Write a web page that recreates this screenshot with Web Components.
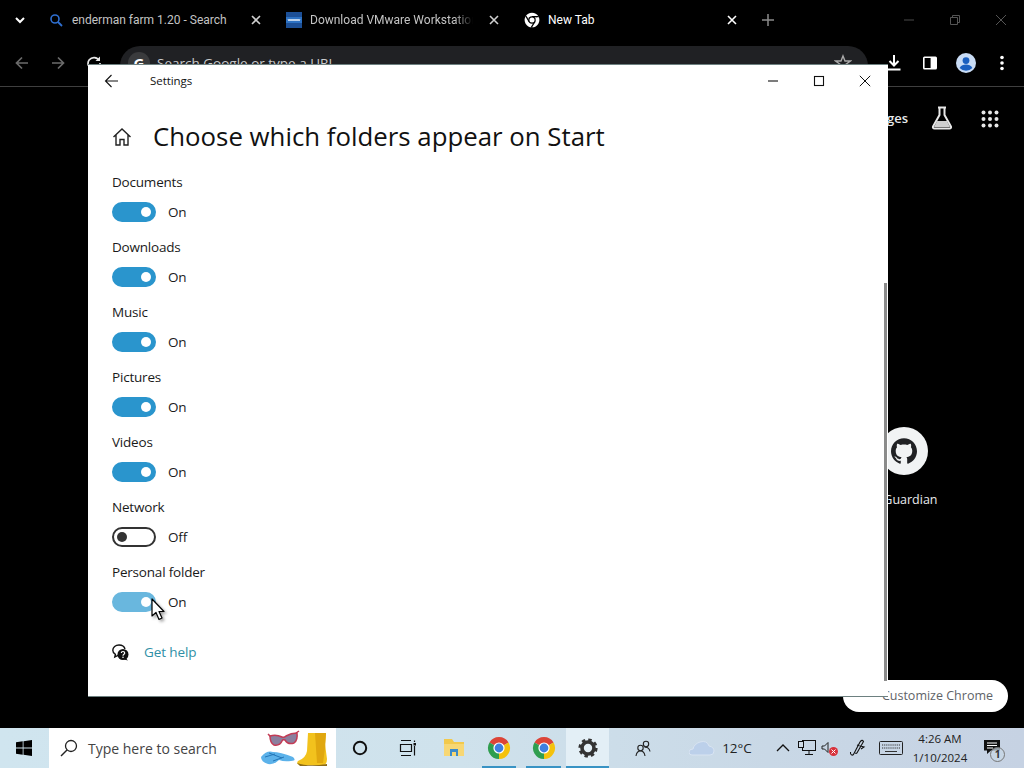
<!DOCTYPE html>
<html lang="en"><head><meta charset="utf-8"><title>Settings</title>
<style>
html,body{margin:0;padding:0;width:1024px;height:768px;overflow:hidden;background:#000;font-family:"Open Sans","Noto Sans",sans-serif}
</style></head>
<body>
<x-desktop>
  <x-browser></x-browser>
  <x-taskbar></x-taskbar>
  <x-settings-window slot="window">
    <x-folder-row label="Documents" state="on"></x-folder-row>
    <x-folder-row label="Downloads" state="on"></x-folder-row>
    <x-folder-row label="Music" state="on"></x-folder-row>
    <x-folder-row label="Pictures" state="on"></x-folder-row>
    <x-folder-row label="Videos" state="on"></x-folder-row>
    <x-folder-row label="Network" state="off"></x-folder-row>
    <x-folder-row label="Personal folder" state="hover"></x-folder-row>
  </x-settings-window>
</x-desktop>
<script>
const chromeLogo=(s,mono)=>`<svg width="${s}" height="${s}" viewBox="0 0 24 24">
<path d="M12 12L2.47 6.5A11 11 0 0 1 21.53 6.5Z" fill="${mono?'#fff':'#dc4437'}"/>
<path d="M12 12L21.53 6.5A11 11 0 0 1 12 23Z" fill="${mono?'#fff':'#f4c20d'}"/>
<path d="M12 12L12 23A11 11 0 0 1 2.47 6.5Z" fill="${mono?'#fff':'#2f9e4f'}"/>
${mono?'<path d="M12 7H22M7.7 14.500L2.700 6M16.300 14.500L11 23" stroke="#000" stroke-width="1.800"/>':''}
<circle cx="12" cy="12" r="5.6" fill="${mono?'#000':'#fff'}"/><circle cx="12" cy="12" r="${mono?3.8:4.4}" fill="${mono?'#fff':'#3f7fe0'}"/></svg>`;
const shadow=(el,html)=>{const r=el.attachShadow({mode:'open'});r.innerHTML=html;return r;};

customElements.define('x-desktop',class extends HTMLElement{constructor(){super();shadow(this,`<style>
:host{display:flex;flex-direction:column;width:1024px;height:768px;position:relative;overflow:hidden;background:#000}
::slotted(x-browser){flex:1 1 auto}
::slotted(x-settings-window){position:absolute;left:88px;top:64px}
</style><slot></slot><slot name="window"></slot>`);}});

customElements.define('x-tab',class extends HTMLElement{constructor(){super();
const fade=this.hasAttribute('fade');
shadow(this,`<style>
:host{display:flex;align-items:center;width:238px;height:40px;box-sizing:border-box;padding:0 14px 0 8px;gap:8px;font:12px/40px Roboto,"Open Sans",sans-serif;color:${this.hasAttribute('active')?'#fff':'#c4c4c4'}}
.t{flex:1;min-width:0;white-space:nowrap;overflow:hidden;${fade?'-webkit-mask-image:linear-gradient(90deg,#000 86%,transparent 97%);':''}}
.i{width:16px;height:16px;display:flex;flex:none}
svg.x{flex:none}
</style><span class="i"><slot name="icon"></slot></span><span class="t"><slot></slot></span>
<svg class="x" width="16" height="16" viewBox="0 0 16 16"><path d="M4 4L12 12M12 4L4 12" stroke="${this.hasAttribute('active')?'#fff':'#d0d0d0'}" stroke-width="1.6"/></svg>`);}});

customElements.define('x-browser',class extends HTMLElement{constructor(){super();shadow(this,`<style>
:host{display:flex;flex-direction:column;background:#000;min-height:0}
.tabs{height:40px;display:flex;align-items:center}
.chev{width:40px;display:flex;justify-content:center}
.plus{width:30px;margin-left:-1px;display:flex;justify-content:center}
.winc{margin-left:auto;display:flex;align-items:center}
.winc span{width:46px;display:flex;justify-content:center}
.bar{height:47px;box-sizing:border-box;border-bottom:1px solid #3f3f3f;display:flex;align-items:flex-start;padding-top:6px}
.nav{width:36px;height:34px;display:flex;align-items:center;justify-content:center;flex:none}
.nav:first-child{margin-left:4px}
.omni{width:748px;height:40px;background:#202124;border-radius:20px;margin-left:8px;margin-right:8px;display:flex;align-items:center;flex:none;box-sizing:border-box;padding:0 14px 6px 8px;font:13.5px "Open Sans",sans-serif;color:#c9cacc}
.g{width:22px;height:22px;border-radius:50%;background:#3a3b3d;color:#fff;display:flex;align-items:center;justify-content:center;font:700 15px "Open Sans",sans-serif;margin-right:7px;flex:none}
.omni .s{flex:1;white-space:nowrap}
.tools{display:flex;margin-left:-8px}
.tools .nav:first-child{margin-left:8px}
.ntp{flex:1;display:flex;flex-direction:column;min-height:0}
.top{height:64px;display:flex;align-items:center;justify-content:flex-end;color:#e8eaed;font:13px "Open Sans",sans-serif;padding-right:20px;box-sizing:border-box}
.top .lab{width:22px;text-align:right;margin:0 20px 2px 0;white-space:nowrap;overflow:hidden;direction:rtl;font-weight:600}
.top .ic{width:28px;display:flex;justify-content:center}
.top .ic+.ic{margin-left:20px}
.top .fl{margin-bottom:2px}
.tile{margin-top:276px;margin-left:904px;display:flex;flex-direction:column;align-items:center;width:0}
.tile .c{width:48px;height:48px;border-radius:50%;background:#f1f3f4;display:flex;align-items:center;justify-content:center;flex:none}
.tile .n{font:12.5px "Open Sans",sans-serif;color:#e8eaed;margin:16px 12px 0 0;white-space:nowrap}
.pill{margin-top:auto;margin-bottom:16px;margin-right:16px;align-self:flex-end;width:165px;height:32px;box-sizing:border-box;border-radius:16px;background:#fff;color:#5f6368;font:12.5px/32px "Open Sans",sans-serif;text-align:right;padding-right:15px}
</style>
<div class="tabs">
 <span class="chev"><svg width="12" height="12" viewBox="0 0 12 12"><path d="M2 4L6 8L10 4" fill="none" stroke="#fff" stroke-width="2"/></svg></span>
 <x-tab><svg slot="icon" width="16" height="16" viewBox="0 0 16 16"><circle cx="7" cy="7" r="4" fill="none" stroke="#2f6fd0" stroke-width="1.6"/><path d="M10 10L14 14" stroke="#2f6fd0" stroke-width="1.8"/></svg>enderman farm 1.20 - Search</x-tab>
 <x-tab fade><svg slot="icon" width="16" height="16" viewBox="0 0 16 16"><rect width="16" height="16" fill="#1c4f96"/><rect y="5" width="16" height="6" fill="#2d72c4"/><path d="M2 7l1 2 1-2 1 2 1-2 1 2 1-2 1 2 1-2 1 2 1-2 1 2 1-2" fill="none" stroke="#fff" stroke-width=".8"/></svg>Download VMware Workstation Pro</x-tab>
 <x-tab active><span slot="icon" style="display:flex">${chromeLogo(16,true)}</span>New Tab</x-tab>
 <span class="plus"><svg width="14" height="14" viewBox="0 0 14 14"><path d="M7 1V13M1 7H13" stroke="#8a8a8a" stroke-width="1.5"/></svg></span>
 <span class="winc">
  <span><svg width="12" height="12" viewBox="0 0 12 12"><path d="M1 6H11" stroke="#4a4a4a"/></svg></span>
  <span><svg width="12" height="12" viewBox="0 0 12 12"><path d="M1.5 3.5H8.5V10.5H1.5ZM3.5 3.5V1.5H10.5V8.5H8.5" fill="none" stroke="#555"/></svg></span>
  <span><svg width="12" height="12" viewBox="0 0 12 12"><path d="M1 1L11 11M11 1L1 11" stroke="#555"/></svg></span>
 </span>
</div>
<div class="bar">
 <span class="nav"><svg width="16" height="16" viewBox="0 0 16 16"><path d="M14 8H2.5M8 2.5L2.5 8L8 13.5" fill="none" stroke="#6b6b6b" stroke-width="1.7"/></svg></span>
 <span class="nav"><svg width="16" height="16" viewBox="0 0 16 16"><path d="M2 8H13.5M8 2.5L13.5 8L8 13.5" fill="none" stroke="#6b6b6b" stroke-width="1.7"/></svg></span>
 <span class="nav"><svg width="16" height="16" viewBox="0 0 16 16"><path d="M13.2 5.5A6 6 0 1 0 14 8" fill="none" stroke="#e8e8e8" stroke-width="1.7"/><path d="M14 1.5V6H9.5Z" fill="#e8e8e8"/></svg></span>
 <div class="omni"><span class="g">G</span><span class="s">Search Google or type a URL</span>
  <svg width="18" height="18" viewBox="0 0 18 18" style="margin-right:2px"><path d="M9 2L11 7H16.4L12 10.2L13.6 15.6L9 12.4L4.4 15.6L6 10.2L1.6 7H7Z" fill="none" stroke="#aaa" stroke-width="1.4"/></svg>
 </div>
 <div class="tools">
  <span class="nav"><svg width="18" height="18" viewBox="0 0 18 18"><path d="M9 1V11M4.5 7L9 11.5L13.5 7M2.5 15.5H15.5" fill="none" stroke="#fff" stroke-width="2"/></svg></span>
  <span class="nav"><svg width="16" height="16" viewBox="0 0 16 16"><rect x="1" y="1.5" width="14" height="13" rx="1.5" fill="#fff"/><rect x="2.6" y="3" width="6" height="10" fill="#000"/></svg></span>
  <span class="nav"><svg width="20" height="20" viewBox="0 0 20 20"><circle cx="10" cy="10" r="10" fill="#c9dcf5"/><circle cx="10" cy="7.6" r="3.4" fill="#1a5fc0"/><path d="M3.6 15C5 12.2 7.5 11.6 10 11.6S15 12.2 16.4 15A9 9 0 0 1 3.6 15Z" fill="#1a5fc0"/></svg></span>
  <span class="nav"><svg width="4" height="16" viewBox="0 0 4 16"><circle cx="2" cy="2.5" r="1.8" fill="#fff"/><circle cx="2" cy="8" r="1.8" fill="#fff"/><circle cx="2" cy="13.5" r="1.8" fill="#fff"/></svg></span>
 </div>
</div>
<div class="ntp">
 <div class="top"><span class="lab">Images</span>
  <span class="ic fl"><svg width="22" height="24" viewBox="0 0 22 24"><path d="M7 1.5H15M8.5 1.5V9L2 20.5Q1.5 22.5 3.5 22.5H18.500Q20.500 22.500 20 20.500L13.500 9V1.500" fill="none" stroke="#e8e8e8" stroke-width="2"/><path d="M6 15H16L19 21H3Z" fill="#cfcfcf"/></svg></span>
  <span class="ic"><svg width="18" height="18" viewBox="0 0 18 18" fill="#e8e8e8"><circle cx="2.500" cy="2.500" r="2"/><circle cx="9" cy="2.500" r="2"/><circle cx="15.500" cy="2.500" r="2"/><circle cx="2.500" cy="9" r="2"/><circle cx="9" cy="9" r="2"/><circle cx="15.500" cy="9" r="2"/><circle cx="2.500" cy="15.500" r="2"/><circle cx="9" cy="15.500" r="2"/><circle cx="15.500" cy="15.500" r="2"/></svg></span>
 </div>
 <div class="tile"><span class="c"><svg width="26" height="26" viewBox="0 0 24 24"><path fill="#202124" d="M12 .297c-6.63 0-12 5.373-12 12 0 5.303 3.438 9.8 8.205 11.385.6.113.82-.258.82-.577 0-.285-.01-1.04-.015-2.04-3.338.724-4.042-1.61-4.042-1.61C4.422 18.07 3.633 17.7 3.633 17.7c-1.087-.744.084-.729.084-.729 1.205.084 1.838 1.236 1.838 1.236 1.07 1.835 2.809 1.305 3.495.998.108-.776.417-1.305.76-1.605-2.665-.3-5.466-1.332-5.466-5.93 0-1.31.465-2.38 1.235-3.22-.135-.303-.54-1.523.105-3.176 0 0 1.005-.322 3.3 1.23.96-.267 1.98-.399 3-.405 1.02.006 2.04.138 3 .405 2.28-1.552 3.285-1.23 3.285-1.23.645 1.653.24 2.873.12 3.176.765.84 1.23 1.91 1.23 3.22 0 4.61-2.805 5.625-5.475 5.92.42.36.81 1.096.81 2.22 0 1.606-.015 2.896-.015 3.286 0 .315.21.69.825.57C20.565 22.092 24 17.592 24 12.297c0-6.627-5.373-12-12-12"/></svg></span><span class="n">The Guardian</span></div>
 <div class="pill">Customize Chrome</div>
</div>`);}});

customElements.define('x-toggle',class extends HTMLElement{constructor(){super();const s=this.getAttribute('state');
const c={on:['#2a95cd','#2a95cd','#fff','flex-end'],off:['#fff','#333','#333','flex-start'],hover:['#69b7de','#69b7de','#fff','flex-end']}[s];
shadow(this,`<style>
:host{display:flex;width:44px;height:20px;box-sizing:border-box;border:2px solid ${c[1]};border-radius:10px;background:${c[0]};align-items:center;justify-content:${c[3]};padding:0 3px;flex:none}
i{display:block;width:10px;height:10px;border-radius:50%;background:${c[2]}}
</style><i></i>`);}});

customElements.define('x-folder-row',class extends HTMLElement{constructor(){super();const s=this.getAttribute('state');
shadow(this,`<style>
:host{display:block;height:65px;font:13.5px/20px "Open Sans",sans-serif;letter-spacing:-.2px;color:#1a1a1a}
.r{display:flex;align-items:center;gap:12px;margin-top:10px;height:20px}
</style><div>${this.getAttribute('label')}</div><div class="r"><x-toggle state="${s}"></x-toggle><span>${s==='off'?'Off':'On'}</span></div>`);}});

customElements.define('x-settings-window',class extends HTMLElement{constructor(){super();shadow(this,`<style>
:host{display:flex;flex-direction:column;width:800px;height:633px;box-sizing:border-box;background:#fff;color:#111;border:1px solid #6d8080;border-width:1px 0 1px 0;position:relative;font-family:"Open Sans",sans-serif}
.tb{height:31px;display:flex;align-items:center;flex:none}
.back{width:48px;display:flex;justify-content:center;flex:none}
.ti{font-size:11.500px;letter-spacing:-.05px;margin-left:14px}
.ctl{margin-left:auto;display:flex}
.ctl span{width:46px;display:flex;justify-content:center}
.h{display:flex;align-items:center;height:76px;box-sizing:border-box;padding:6px 0 0 24px;flex:none}
.h svg{flex:none}
h1{margin:-2px 0 0 21px;font:400 25.800px/40px "Open Sans",sans-serif;color:#111;white-space:nowrap}
.list{padding-left:24px}
.help{display:flex;align-items:center;gap:15px;padding-left:24px;margin-top:15px;height:20px;font-size:13.500px;letter-spacing:-.1px;color:#2f8fa6}
.sb{position:absolute;right:1px;top:218px;width:3px;height:398px;background:#8b8b8b}
.cur{position:absolute;left:63px;top:533px;filter:drop-shadow(2px 2px 1.500px rgba(0,0,0,.35))}
</style>
<div class="tb"><span class="back"><svg width="16" height="16" viewBox="0 0 16 16"><path d="M14 8H1.500M7.500 2L1.500 8L7.500 14" fill="none" stroke="#111" stroke-width="1.100"/></svg></span><span class="ti">Settings</span>
 <span class="ctl">
  <span><svg width="12" height="12" viewBox="0 0 12 12"><path d="M1 6H11" stroke="#111" stroke-width="1.100"/></svg></span>
  <span><svg width="12" height="12" viewBox="0 0 12 12"><rect x="1.500" y="1.500" width="9" height="9" fill="none" stroke="#111" stroke-width="1.100"/></svg></span>
  <span><svg width="12" height="12" viewBox="0 0 12 12"><path d="M.8 .8L11.200 11.200M11.200 .8L.8 11.200" stroke="#111" stroke-width="1"/></svg></span>
 </span></div>
<div class="h"><svg width="20" height="20" viewBox="0 0 20 20"><path d="M1.500 10L10 2L18.500 10M4 8V18H8V12.500H12V18H16V8" fill="none" stroke="#222" stroke-width="1.400"/></svg><h1>Choose which folders appear on Start</h1></div>
<div class="list"><slot></slot></div>
<div class="help"><svg width="17" height="17" viewBox="0 0 17 17"><path d="M7 1C3.500 1 .8 3.300 .8 6.200C.8 8 1.800 9.500 3.400 10.400L2.800 13L6 11.300" fill="none" stroke="#111" stroke-width="1.400"/><path d="M7 1C10 1 12.400 2.700 13 5" fill="none" stroke="#111" stroke-width="1.400"/><circle cx="11" cy="10.500" r="5.500" fill="#111"/><path d="M14 14.500L16 16.500L12 15.500Z" fill="#111"/><path d="M9.300 9C9.300 7 12.700 7 12.700 9C12.700 10.300 11 10.300 11 11.700" fill="none" stroke="#fff" stroke-width="1.200"/><circle cx="11" cy="13.300" r=".8" fill="#fff"/></svg><span>Get help</span></div>
<div class="sb"></div>
<svg class="cur" width="16" height="24" viewBox="0 0 16 24"><path d="M1 1V18L5 14.500L8 21.500L11 20L8 13.500H13Z" fill="#fff" stroke="#000" stroke-width="1.200" stroke-linejoin="round"/></svg>`);}});

customElements.define('x-taskbar',class extends HTMLElement{constructor(){super();shadow(this,`<style>
:host{display:flex;height:40px;flex:none;background:linear-gradient(90deg,#d0e5ef 0%,#cfe2ec 45%,#c9d8e6 75%,#c6d2e3 100%);align-items:stretch;color:#1a1a1a;font:13.500px "Open Sans",sans-serif}
.start{width:48px;display:flex;align-items:center;justify-content:center;flex:none}
.search{width:287px;margin-left:1px;background:#fff;display:flex;align-items:center;box-sizing:border-box;padding-left:11px;flex:none;color:#444;font-size:14px;position:relative}
.search .tx{margin-left:10px;white-space:nowrap}
.search .art{position:absolute;right:6px;top:1px}
.b{display:flex;align-items:center;justify-content:center;flex:none;box-sizing:border-box}
.run{border-bottom:2px solid #3893c4;margin:0 5px;padding-top:2px}
.act{background:#e3eff6;border-bottom:2px solid #3893c4;padding-top:2px}
.tray{display:flex;align-items:stretch;flex:none}
.temp{font-size:13.500px;color:#222}
.clock{width:72px;display:flex;flex-direction:column;align-items:center;justify-content:center;font-size:11.500px;line-height:19px;color:#222}
.note{position:relative}
.note em{position:absolute;left:14px;top:19px;width:13px;height:13px;border-radius:50%;border:1.500px solid #777;background:rgba(200,215,230,.7);font:700 10px/13px "Open Sans",sans-serif;color:#333;text-align:center;box-sizing:content-box}
</style>
<div class="start"><svg width="16" height="16" viewBox="0 0 16 16" fill="#000"><path d="M0 2.300L6.700 1.300V7.600H0ZM7.500 1.200L16 0V7.600H7.500ZM0 8.400H6.700V14.700L0 13.700ZM7.500 8.400H16V16L7.500 14.800Z"/></svg></div>
<div class="search"><svg width="18" height="18" viewBox="0 0 18 18"><circle cx="11" cy="7" r="5.500" fill="none" stroke="#222" stroke-width="1.300"/><path d="M7 11L1 17" stroke="#222" stroke-width="1.500"/></svg><span class="tx">Type here to search</span>
 <svg class="art" width="72" height="38" viewBox="0 0 72 38">
  <path d="M13 8L10 5M38 4L41 2" stroke="#c33b55" stroke-width="1.500" fill="none"/>
  <path d="M12 7Q18 5 24 8Q26 9 28 7Q33 4 39 4Q40 11 36 14Q30 16 27 11Q25 10 24 12Q22 17 16 16Q12 14 12 7Z" fill="#8b7f9e" stroke="#c33b55" stroke-width="1.500"/>
  <path d="M3 28Q9 21 15 23Q22 23 35 28Q39 32 33 32Q26 33 21 31Q16 36 10 35Q3 33 3 28Z" fill="#5cb2ea"/>
  <path d="M7 28L17 25M11 24L24 29M15 32L26 28" stroke="#2477b8" stroke-width="1" fill="none"/>
  <path d="M50 4H68L67 15L69 30Q69 36 65 36H45Q37 36 40 32Q48 29 49 22Z" fill="#f2c21d"/>
  <path d="M57 4H68L67 20L65 34H59Z" fill="#e0a70f"/><path d="M39 34Q50 38 69 35V37H42Z" fill="#8d6c17"/>
 </svg>
</div>
<span class="b" style="width:48px"><svg width="16" height="16" viewBox="0 0 16 16"><circle cx="8" cy="8" r="6.200" fill="none" stroke="#111" stroke-width="2"/></svg></span>
<span class="b" style="width:47px"><svg width="18" height="16" viewBox="0 0 18 16" fill="none" stroke="#111" stroke-width="1.200"><path d="M2 .5H12M2 15.500H12M1.500 4.500H12.500V11.500H1.500Z"/><path d="M15.500 .5V2M15.500 6V15.500" /><rect x="14.500" y="3" width="2.500" height="2.500" fill="#111" stroke="none"/></svg></span>
<span class="b" style="width:46px"><svg width="22" height="20" viewBox="0 0 22 20"><path d="M1 1H9L11 4H21V18H1Z" fill="#f2c94c"/><path d="M1 6H21V18H1Z" fill="#f7d774"/><path d="M7 11H15V18H13V14H9V18H7Z" fill="#3d8bc9"/></svg></span>
<span class="b run" style="width:34px">${chromeLogo(24)}</span>
<span class="b run" style="width:35px">${chromeLogo(24)}</span>
<span class="b act" style="width:43px"><svg width="20" height="20" viewBox="0 0 20 20"><circle cx="10" cy="10" r="6" fill="none" stroke="#333" stroke-width="3.600"/><circle cx="10" cy="10" r="8.200" fill="none" stroke="#333" stroke-width="2.800" stroke-dasharray="3.400 3.040"/></svg></span>
<div class="tray" style="margin-left:12px">
 <span class="b" style="width:44px"><svg width="16" height="17" viewBox="0 0 16 17" fill="none" stroke="#222" stroke-width="1.100"><circle cx="5.500" cy="8" r="2.700"/><path d="M1 16C1.500 12.500 3 11 5.500 11S9.500 12.500 10 16"/><circle cx="11" cy="4" r="2.700"/><path d="M9.500 7.300C12 7 14.500 8.500 15 11.500"/></svg></span>
 <span class="b" style="width:26px;margin-left:24px"><svg width="26" height="16" viewBox="0 0 26 16"><path d="M3 15Q0 15 0 12Q0 9 4 9Q5 4 11 2Q18 0 20 6Q25 7 25 11Q25 15 21 15Z" fill="#bcd0ea" stroke="#d9e4f2"/></svg></span>
 <span class="b temp" style="width:30px;margin-left:7px">12°C</span>
 <span class="b" style="width:18px;margin-left:22px"><svg width="14" height="8" viewBox="0 0 14 8"><path d="M1 7L7 1L13 7" fill="none" stroke="#111" stroke-width="1.300"/></svg></span>
 <span class="b" style="width:24px;margin-left:3px"><svg width="18" height="16" viewBox="0 0 18 16" fill="none" stroke="#111"><rect x="4.500" y=".5" width="13" height="10"/><rect x=".5" y="1.500" width="5" height="6" fill="#d0dce8"/><path d="M11 10.500V14M7 14.500H15"/></svg></span>
 <span class="b" style="width:20px;margin-left:1px"><svg width="18" height="16" viewBox="0 0 18 16"><path d="M1 6H3.500L7 2.500V12.500L3.500 9H1Z" fill="none" stroke="#222"/><circle cx="12.500" cy="11.500" r="4.500" fill="#d8323c"/><path d="M10.500 9.500L14.500 13.500M14.500 9.500L10.500 13.500" stroke="#fff"/></svg></span>
 <span class="b" style="width:18px;margin-left:9px"><svg width="18" height="18" viewBox="0 0 18 18" fill="none" stroke="#111" stroke-width="1.100"><path d="M1.500 13C1 16.500 4 17 5 14.500L11 3Q13 0 14.500 2.500L8.500 13Q7.500 15 6.300 14M8 6L15 8L12 10"/></svg></span>
 <span class="b" style="width:24px;margin-left:12px"><svg width="24" height="14" viewBox="0 0 24 14" fill="none"><rect x=".5" y=".5" width="23" height="13" rx="1" stroke="#222"/><path d="M3 4H21M3 7H21" stroke="#333" stroke-dasharray="1.200 .9"/><path d="M6 10.500H18" stroke="#333"/></svg></span>
 <span class="clock" style="margin-left:1px"><span>4:26 AM</span><span>1/10/2024</span></span>
 <span class="b note" style="width:48px"><svg width="16" height="14" viewBox="0 0 16 14" style="margin-right:16px;margin-top:-3px"><path d="M0 0H16V10.500H7L3 14V10.500H0Z" fill="#111"/><path d="M3 3H13M3 5.500H13M3 8H9" stroke="#fff"/></svg><em>1</em></span>
</div>`);}});
</script>
</body></html>
